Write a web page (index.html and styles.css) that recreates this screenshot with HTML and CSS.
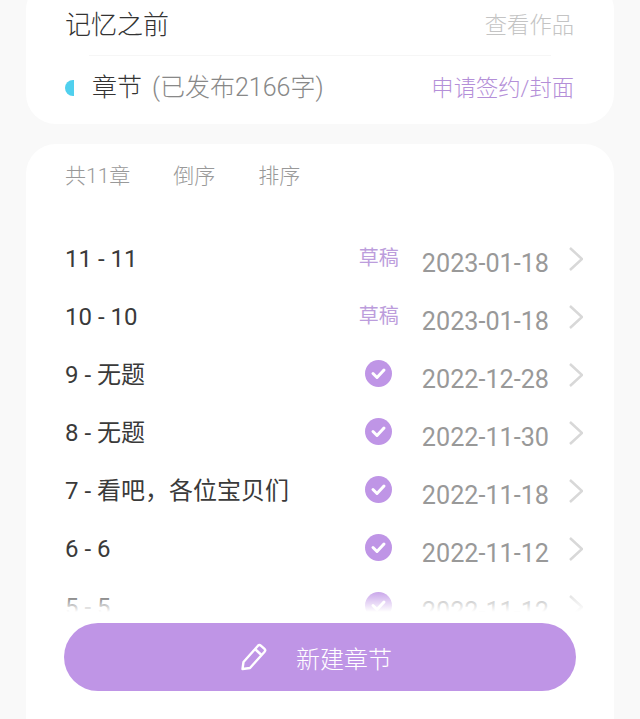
FILE: index.html
```html
<!DOCTYPE html>
<html lang="zh">
<head>
  <meta charset="UTF-8" />
  <meta name="viewport" content="width=device-width, initial-scale=1" />
  <title>记忆之前</title>
  <link rel="stylesheet" href="styles.css">
</head>
<body>
  <section class="card info">
    <div class="info-top">
      <span class="book-title">记忆之前</span>
      <a class="view-link">查看作品</a>
    </div>
    <div class="divider"></div>
    <div class="info-bottom">
      <span class="dot"></span>
      <span class="section-name">章节</span>
      <span class="section-count">(已发布2166字)</span>
      <a class="sign-link">申请签约/封面</a>
    </div>
  </section>

  <section class="card chapters">
    <div class="tools">
      <span>共11章</span>
      <span>倒序</span>
      <span>排序</span>
    </div>
    <div class="list-wrap">
      <div class="row">
        <span class="name">11 - 11</span>
        <span class="draft">草稿</span>
        <span class="date">2023-01-18</span>
        <svg class="arrow" viewBox="0 0 16 26"><path d="M2 2l12 11L2 24"/></svg>
      </div>
      <div class="row">
        <span class="name">10 - 10</span>
        <span class="draft">草稿</span>
        <span class="date">2023-01-18</span>
        <svg class="arrow" viewBox="0 0 16 26"><path d="M2 2l12 11L2 24"/></svg>
      </div>
      <div class="row">
        <span class="name">9 - 无题</span>
        <span class="status"><svg class="check" viewBox="0 0 27 27"><circle cx="13.5" cy="13.5" r="13.5"/><path d="M8 13.5l4 4 7-7.5"/></svg></span>
        <span class="date">2022-12-28</span>
        <svg class="arrow" viewBox="0 0 16 26"><path d="M2 2l12 11L2 24"/></svg>
      </div>
      <div class="row">
        <span class="name">8 - 无题</span>
        <span class="status"><svg class="check" viewBox="0 0 27 27"><circle cx="13.5" cy="13.5" r="13.5"/><path d="M8 13.5l4 4 7-7.5"/></svg></span>
        <span class="date">2022-11-30</span>
        <svg class="arrow" viewBox="0 0 16 26"><path d="M2 2l12 11L2 24"/></svg>
      </div>
      <div class="row">
        <span class="name">7 - 看吧，各位宝贝们</span>
        <span class="status"><svg class="check" viewBox="0 0 27 27"><circle cx="13.5" cy="13.5" r="13.5"/><path d="M8 13.5l4 4 7-7.5"/></svg></span>
        <span class="date">2022-11-18</span>
        <svg class="arrow" viewBox="0 0 16 26"><path d="M2 2l12 11L2 24"/></svg>
      </div>
      <div class="row">
        <span class="name">6 - 6</span>
        <span class="status"><svg class="check" viewBox="0 0 27 27"><circle cx="13.5" cy="13.5" r="13.5"/><path d="M8 13.5l4 4 7-7.5"/></svg></span>
        <span class="date">2022-11-12</span>
        <svg class="arrow" viewBox="0 0 16 26"><path d="M2 2l12 11L2 24"/></svg>
      </div>
      <div class="row">
        <span class="name">5 - 5</span>
        <span class="status"><svg class="check" viewBox="0 0 27 27"><circle cx="13.5" cy="13.5" r="13.5"/><path d="M8 13.5l4 4 7-7.5"/></svg></span>
        <span class="date">2022-11-12</span>
        <svg class="arrow" viewBox="0 0 16 26"><path d="M2 2l12 11L2 24"/></svg>
      </div>
      <div class="fade"></div>
    </div>
    <button class="new-btn">
      <svg class="pencil" viewBox="0 0 28 28"><path d="M2.500 26l1-7L18 2.700a2 2 0 0 1 2.800-.1l3.700 3.300a2 2 0 0 1 .1 2.800L10 25z"/><path d="M15.500 6.500l6.500 6"/></svg>
      <span>新建章节</span>
    </button>
  </section>
</body>
</html>
```

FILE: styles.css
```css
body {
  margin: 0;
  height: 719px;
  overflow: hidden;
  background-color: #f9f9f9;
  font-family: Roboto, "Noto Sans CJK SC", sans-serif;
  display: flex;
  flex-direction: column;
  gap: 20px;
}
.card {
  margin: 0 26px;
  padding: 0 39px;
  background-color: white;
  border-radius: 30px;
}
.info {
  margin-top: -20px;
  height: 144px;
  box-sizing: border-box;
  padding-top: 20px;
  flex-shrink: 0;
}
.info-top {
  height: 50px;
  margin-bottom: 5px;
  display: flex;
  justify-content: space-between;
  align-items: center;
}
.book-title {
  font-size: 26px;
  font-weight: 300;
  line-height: 34px;
  color: #333;
}
.view-link {
  font-size: 22.3px;
  font-weight: 300;
  line-height: 30px;
  color: #c4c4c4;
  margin-right: 1px;
}
.divider {
  height: 1px;
  margin: 3px 24px 0;
  background-color: #f6f6f6;
}
.info-bottom {
  height: 64px;
  display: flex;
  align-items: center;
}
.dot {
  width: 9px;
  height: 16px;
  border-radius: 9px 0 0 9px;
  background-color: #50d0ee;
  margin-right: 18px;
}
.section-name {
  font-size: 25px;
  font-weight: 300;
  line-height: 30px;
  color: #333;
  margin-right: 10px;
}
.section-count {
  font-size: 25px;
  font-weight: 300;
  line-height: 30px;
  color: #888;
}
.sign-link {
  margin-left: auto;
  margin-right: 1px;
  font-size: 22.3px;
  font-weight: 300;
  line-height: 30px;
  color: #b48fd8;
}
.chapters {
  flex: 1;
  border-bottom-left-radius: 0;
  border-bottom-right-radius: 0;
}
.tools {
  height: 85px;
  padding-bottom: 25px;
  box-sizing: border-box;
  display: flex;
  gap: 43px;
  align-items: center;
  font-size: 21px;
  font-weight: 300;
  color: #999;
}
.list-wrap {
  position: relative;
  height: 383px;
  overflow: hidden;
  margin-right: -8px;
}
.row {
  height: 58px;
  display: flex;
  align-items: center;
}
.name {
  flex: 1;
  font-size: 24px;
  line-height: 30px;
  color: #3a3a3a;
  margin-top: 1px;
}
.draft {
  font-size: 20px;
  line-height: 30px;
  color: #bc9ddc;
  width: 41px;
  margin-right: 22px;
  white-space: nowrap;
}
.status {
  display: flex;
  width: 41px;
  margin-right: 22px;
  justify-content: center;
}
.check {
  width: 27px;
  height: 27px;
  margin-top: -1px;
  margin-left: -1px;
}
.check circle {
  fill: #bf95e6;
}
.check path {
  fill: none;
  stroke: white;
  stroke-width: 3;
  stroke-linecap: round;
  stroke-linejoin: round;
}
.date {
  font-size: 25.2px;
  color: #999;
  margin-top: 10px;
  white-space: nowrap;
}
.arrow {
  width: 16px;
  height: 26px;
  margin-left: 19px;
  margin-right: -1px;
  margin-top: 2px;
  flex-shrink: 0;
  fill: none;
  stroke: #d8d8d8;
  stroke-width: 2.5;
}
.fade {
  position: absolute;
  left: 0;
  right: 0;
  bottom: 0;
  height: 24px;
  background: linear-gradient(rgba(255, 255, 255, 0), white);
}
.new-btn {
  width: 512px;
  height: 68px;
  margin: 11px 0 0 -1px;
  border: none;
  border-radius: 34px;
  background-color: #bf95e6;
  color: white;
  font-family: inherit;
  font-size: 24px;
  font-weight: 300;
  display: flex;
  align-items: center;
  justify-content: center;
  gap: 28px;
  padding: 0 8px 0 0;
}
.pencil {
  width: 28px;
  height: 28px;
  fill: none;
  stroke: white;
  stroke-width: 2.4;
  stroke-linejoin: round;
}
```
